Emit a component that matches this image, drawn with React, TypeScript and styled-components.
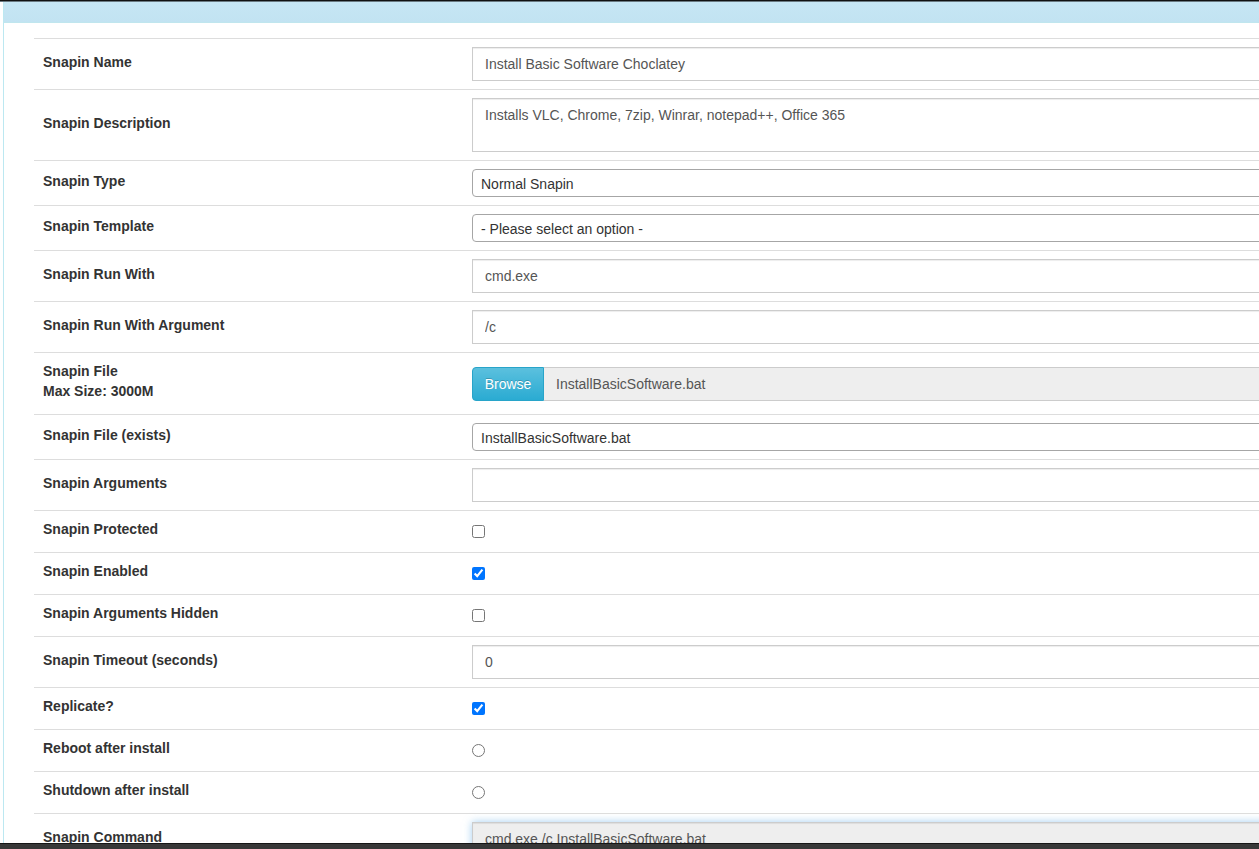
import React from "react";
import styled, { createGlobalStyle } from "styled-components";

const Global = createGlobalStyle`
  html, body { margin: 0; padding: 0; background: #fff; }
  body { font-family: "Liberation Sans", Arial, Helvetica, sans-serif; font-size: 14px; line-height: 20px; color: #333; }
  * { box-sizing: border-box; }
`;

const Screen = styled.div`
  height: 100vh;
  display: flex;
  flex-direction: column;
  overflow: hidden;
`;

const TopEdge = styled.div`
  height: 2px;
  flex: none;
  background: linear-gradient(#111 0, #111 1px, #6a7a82 1px);
`;

const Viewport = styled.div`
  flex: 1;
  min-height: 0;
  overflow: hidden;
  padding-left: 3px;
`;

const Panel = styled.section`
  width: 1500px;
  border-left: 1px solid #bce8f1;
`;

const PanelHeading = styled.div`
  height: 21px;
  background: linear-gradient(#c6e6f4, #c2e3f2);
  border-bottom: 1px solid #c0e6ee;
`;

const PanelBody = styled.div`
  padding: 15px 0 0 30px;
`;

const Table = styled.table`
  width: 100%;
  border-collapse: collapse;
  border-spacing: 0;
`;

const Row = styled.tr`
  border-top: 1px solid #ddd;
`;

const LabelCell = styled.td`
  width: 430px;
  padding: 8px 9px;
  vertical-align: middle;
`;

const FieldCell = styled.td`
  padding: 8px 8px;
  vertical-align: middle;
`;

const Label = styled.label`
  display: inline-block;
  margin-bottom: 5px;
  font-weight: bold;
  font-size: 14px;
  line-height: 20px;
  color: #333;
`;

const TextInput = styled.input<{ $readOnlyLook?: boolean; $focus?: boolean }>`
  display: block;
  width: 100%;
  height: 34px;
  padding: 6px 12px;
  font-family: inherit;
  font-size: 14px;
  line-height: 20px;
  color: #555;
  background: ${(p) => (p.$readOnlyLook ? "#eee" : "#fff")};
  border: 1px solid #ccc;
  border-radius: 0;
  box-shadow: ${(p) =>
    p.$focus
      ? "inset 0 1px 1px rgba(0,0,0,.075), 0 0 8px rgba(102,175,233,.6)"
      : "inset 0 1px 1px rgba(0,0,0,.075)"};
  outline: none;
`;

const TextArea = styled.textarea`
  display: block;
  width: 100%;
  height: 54px;
  padding: 6px 12px;
  font-family: inherit;
  font-size: 14px;
  line-height: 20px;
  color: #555;
  background: #fff;
  border: 1px solid #ccc;
  border-radius: 0;
  resize: none;
  box-shadow: inset 0 1px 1px rgba(0,0,0,.075);
  outline: none;
`;

const Select = styled.div`
  display: flex;
  align-items: center;
  width: 100%;
  height: 28px;
  padding: 1px 8px 0;
  font-size: 14px;
  color: #333;
  background: #fff;
  border: 1px solid #a6a6a6;
  border-radius: 4px;
`;

const InputGroup = styled.div`
  display: flex;
  width: 100%;
  height: 34px;
`;

const BrowseButton = styled.span`
  flex: none;
  display: flex;
  align-items: center;
  justify-content: center;
  width: 72px;
  height: 34px;
  color: #fff;
  font-size: 14px;
  background: linear-gradient(#5bc0de, #2aabd2);
  border: 1px solid #28a4c9;
  border-radius: 4px 0 0 4px;
  text-shadow: 0 -1px 0 rgba(0,0,0,.2);
`;

const FileName = styled.span`
  flex: 1;
  display: flex;
  align-items: center;
  padding: 0 12px;
  color: #555;
  background: #eee;
  border: 1px solid #ccc;
  border-left: none;
`;

const Check = styled.input`
  display: block;
  width: 13px;
  height: 13px;
  margin: 0;
`;

const BottomBar = styled.div`
  height: 6px;
  flex: none;
  background: linear-gradient(#161616 0, #161616 1px, #383838 1px);
`;

type Field =
  | { kind: "text"; value: string; readOnly?: boolean; focus?: boolean }
  | { kind: "area"; value: string }
  | { kind: "select"; value: string }
  | { kind: "file"; value: string }
  | { kind: "check"; checked: boolean }
  | { kind: "radio"; name: string };

const rows: { label: React.ReactNode; field: Field }[] = [
  { label: "Snapin Name", field: { kind: "text", value: "Install Basic Software Choclatey" } },
  { label: "Snapin Description", field: { kind: "area", value: "Installs VLC, Chrome, 7zip, Winrar, notepad++, Office 365" } },
  { label: "Snapin Type", field: { kind: "select", value: "Normal Snapin" } },
  { label: "Snapin Template", field: { kind: "select", value: "- Please select an option -" } },
  { label: "Snapin Run With", field: { kind: "text", value: "cmd.exe" } },
  { label: "Snapin Run With Argument", field: { kind: "text", value: "/c" } },
  {
    label: (
      <>
        Snapin File
        <br />
        Max Size: 3000M
      </>
    ),
    field: { kind: "file", value: "InstallBasicSoftware.bat" },
  },
  { label: "Snapin File (exists)", field: { kind: "select", value: "InstallBasicSoftware.bat" } },
  { label: "Snapin Arguments", field: { kind: "text", value: "" } },
  { label: "Snapin Protected", field: { kind: "check", checked: false } },
  { label: "Snapin Enabled", field: { kind: "check", checked: true } },
  { label: "Snapin Arguments Hidden", field: { kind: "check", checked: false } },
  { label: "Snapin Timeout (seconds)", field: { kind: "text", value: "0" } },
  { label: "Replicate?", field: { kind: "check", checked: true } },
  { label: "Reboot after install", field: { kind: "radio", name: "reboot" } },
  { label: "Shutdown after install", field: { kind: "radio", name: "shutdown" } },
  { label: "Snapin Command", field: { kind: "text", value: "cmd.exe /c InstallBasicSoftware.bat", readOnly: true, focus: true } },
];

function renderField(f: Field) {
  switch (f.kind) {
    case "text":
      return <TextInput type="text" defaultValue={f.value} readOnly={f.readOnly} $readOnlyLook={f.readOnly} $focus={f.focus} />;
    case "area":
      return <TextArea defaultValue={f.value} />;
    case "select":
      return <Select>{f.value}</Select>;
    case "file":
      return (
        <InputGroup>
          <BrowseButton>Browse</BrowseButton>
          <FileName>{f.value}</FileName>
        </InputGroup>
      );
    case "check":
      return <Check type="checkbox" defaultChecked={f.checked} />;
    case "radio":
      return <Check type="radio" name={f.name} />;
  }
}

export default function App() {
  return (
    <Screen>
      <Global />
      <TopEdge />
      <Viewport>
        <Panel>
          <PanelHeading />
          <PanelBody>
            <Table>
              <tbody>
                {rows.map((r, i) => (
                  <Row key={i}>
                    <LabelCell>
                      <Label>{r.label}</Label>
                    </LabelCell>
                    <FieldCell>{renderField(r.field)}</FieldCell>
                  </Row>
                ))}
              </tbody>
            </Table>
          </PanelBody>
        </Panel>
      </Viewport>
      <BottomBar />
    </Screen>
  );
}
